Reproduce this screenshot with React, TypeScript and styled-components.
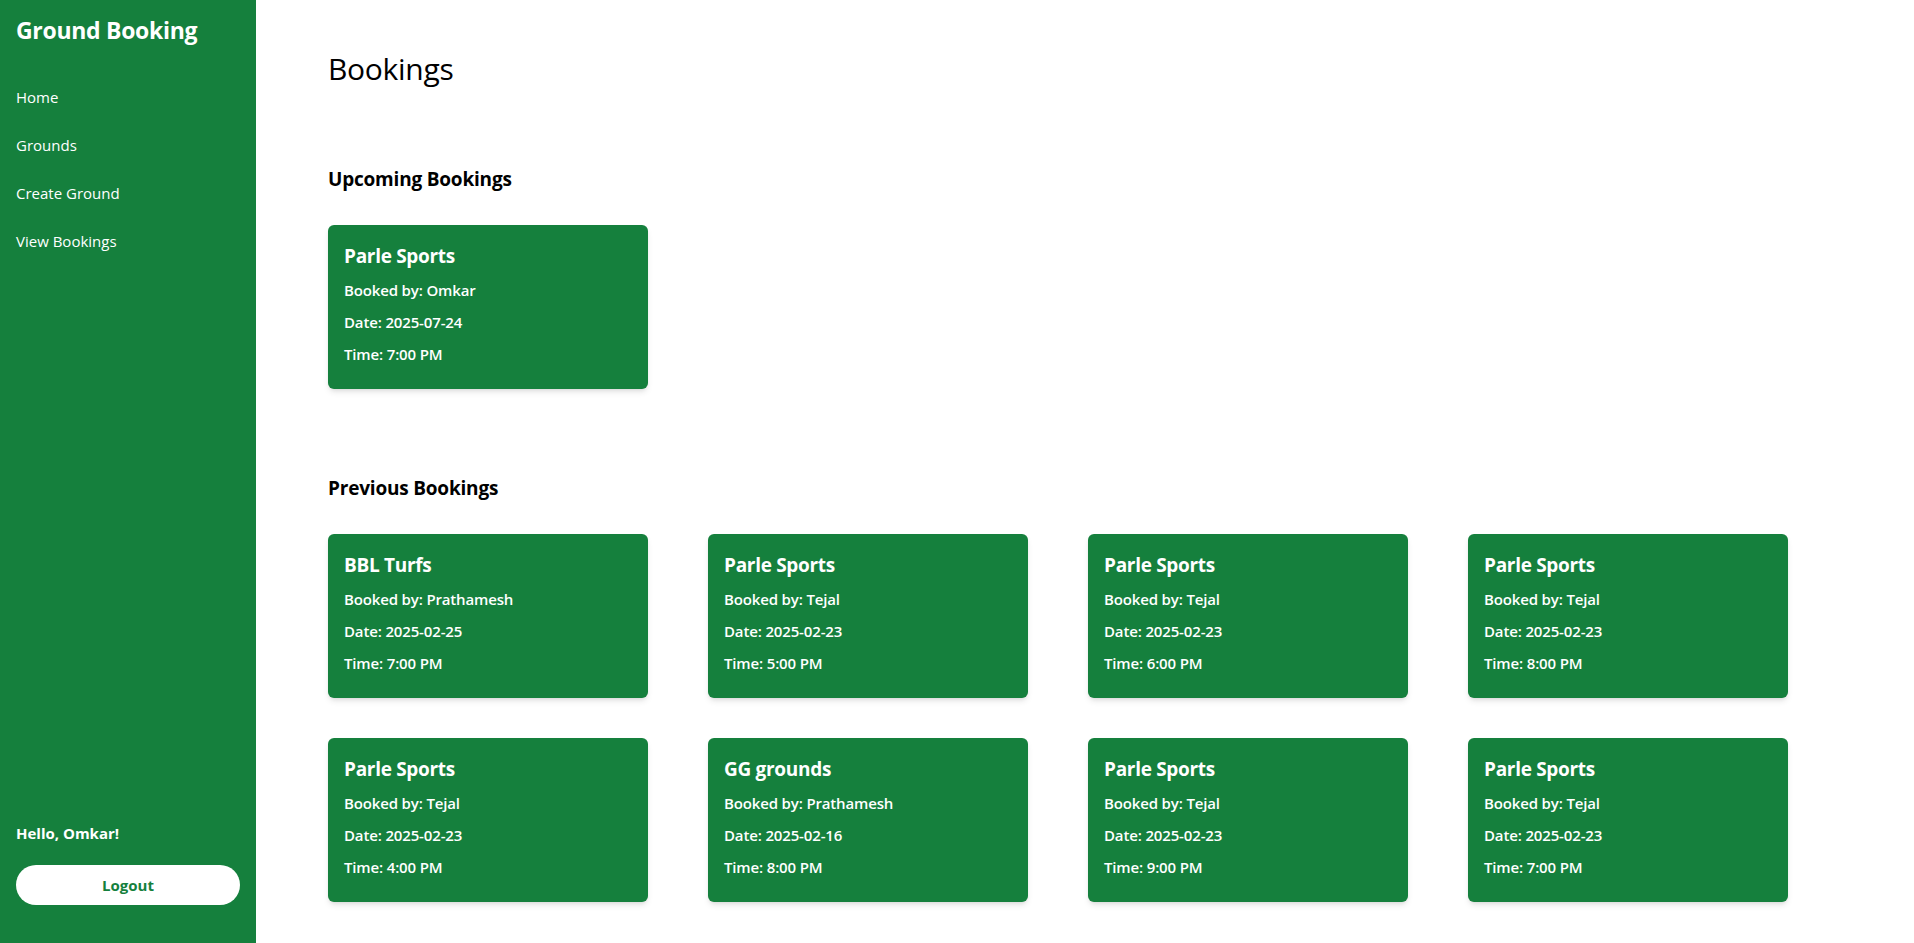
import React from 'react';
import styled, { createGlobalStyle } from 'styled-components';

const GlobalStyle = createGlobalStyle`
  * {
    box-sizing: border-box;
  }
  body {
    margin: 0;
    font-family: "Open Sans", "Noto Sans", sans-serif;
    background: #ffffff;
    color: #000000;
  }
`;

const green = '#15803d';

const Layout = styled.div`
  display: flex;
  min-height: 100vh;
`;

const Sidebar = styled.aside`
  width: 256px;
  flex-shrink: 0;
  background-color: ${green};
  color: white;
  display: flex;
  flex-direction: column;
  padding: 14px 16px 38px;
  height: 100vh;
  position: sticky;
  top: 0;
`;

const Brand = styled.h1`
  font-size: 23px;
  font-weight: 700;
  line-height: 32px;
  margin: 0 0 31px;
  letter-spacing: -0.3px;
`;

const NavList = styled.nav`
  display: flex;
  flex-direction: column;
  gap: 8px;
`;

const NavLink = styled.a`
  color: white;
  text-decoration: none;
  font-size: 15px;
  line-height: 24px;
  padding: 8px 0;
  cursor: pointer;

  &:hover {
    text-decoration: underline;
  }
`;

const SidebarFooter = styled.div`
  margin-top: auto;
  display: flex;
  flex-direction: column;
  gap: 20px;
`;

const Greeting = styled.p`
  margin: 0;
  font-size: 15px;
  line-height: 24px;
  font-weight: 700;
`;

const LogoutButton = styled.button`
  height: 40px;
  width: 100%;
  border: none;
  border-radius: 9999px;
  background: white;
  color: ${green};
  font-family: inherit;
  font-size: 15px;
  font-weight: 700;
  cursor: pointer;

  &:hover {
    background: #f0fdf4;
  }
`;

const Main = styled.main`
  flex: 1;
  padding: 51px 72px 40px;
`;

const PageTitle = styled.h1`
  font-size: 30px;
  font-weight: 500;
  line-height: 36px;
  margin: 0 0 78px;
  letter-spacing: -0.3px;
`;

const Section = styled.section`
  margin-bottom: 85px;

  &:last-child {
    margin-bottom: 0;
  }
`;

const SectionTitle = styled.h2`
  font-size: 19px;
  font-weight: 700;
  line-height: 28px;
  margin: 0 0 32px;
  letter-spacing: -0.2px;
`;

const CardGrid = styled.div`
  display: grid;
  grid-template-columns: repeat(4, 320px);
  column-gap: 60px;
  row-gap: 40px;
`;

const Card = styled.div`
  background-color: ${green};
  color: white;
  border-radius: 6px;
  padding: 17px 16px 15px;
  box-shadow: 0 4px 6px -1px rgba(0, 0, 0, 0.1), 0 2px 4px -2px rgba(0, 0, 0, 0.1);
`;

const CardTitle = styled.h3`
  font-size: 19px;
  font-weight: 700;
  line-height: 28px;
  margin: 0 0 8px;
  letter-spacing: -0.3px;
`;

const CardLine = styled.p`
  font-size: 15px;
  font-weight: 600;
  line-height: 24px;
  margin: 0 0 8px;
  letter-spacing: -0.15px;
`;

interface Booking {
  ground: string;
  user: string;
  date: string;
  time: string;
}

const upcoming: Booking[] = [
  { ground: 'Parle Sports', user: 'Omkar', date: '2025-07-24', time: '7:00 PM' },
];

const previous: Booking[] = [
  { ground: 'BBL Turfs', user: 'Prathamesh', date: '2025-02-25', time: '7:00 PM' },
  { ground: 'Parle Sports', user: 'Tejal', date: '2025-02-23', time: '5:00 PM' },
  { ground: 'Parle Sports', user: 'Tejal', date: '2025-02-23', time: '6:00 PM' },
  { ground: 'Parle Sports', user: 'Tejal', date: '2025-02-23', time: '8:00 PM' },
  { ground: 'Parle Sports', user: 'Tejal', date: '2025-02-23', time: '4:00 PM' },
  { ground: 'GG grounds', user: 'Prathamesh', date: '2025-02-16', time: '8:00 PM' },
  { ground: 'Parle Sports', user: 'Tejal', date: '2025-02-23', time: '9:00 PM' },
  { ground: 'Parle Sports', user: 'Tejal', date: '2025-02-23', time: '7:00 PM' },
];

const BookingCard = ({ booking }: { booking: Booking }) => (
  <Card>
    <CardTitle>{booking.ground}</CardTitle>
    <CardLine>Booked by: {booking.user}</CardLine>
    <CardLine>Date: {booking.date}</CardLine>
    <CardLine>Time: {booking.time}</CardLine>
  </Card>
);

const App = () => {
  return (
    <>
      <GlobalStyle />
      <Layout>
        <Sidebar>
          <Brand>Ground Booking</Brand>
          <NavList>
            <NavLink>Home</NavLink>
            <NavLink>Grounds</NavLink>
            <NavLink>Create Ground</NavLink>
            <NavLink>View Bookings</NavLink>
          </NavList>
          <SidebarFooter>
            <Greeting>Hello, Omkar!</Greeting>
            <LogoutButton>Logout</LogoutButton>
          </SidebarFooter>
        </Sidebar>

        <Main>
          <PageTitle>Bookings</PageTitle>

          <Section>
            <SectionTitle>Upcoming Bookings</SectionTitle>
            <CardGrid>
              {upcoming.map((b, i) => (
                <BookingCard key={i} booking={b} />
              ))}
            </CardGrid>
          </Section>

          <Section>
            <SectionTitle>Previous Bookings</SectionTitle>
            <CardGrid>
              {previous.map((b, i) => (
                <BookingCard key={i} booking={b} />
              ))}
            </CardGrid>
          </Section>
        </Main>
      </Layout>
    </>
  );
};

export default App;
